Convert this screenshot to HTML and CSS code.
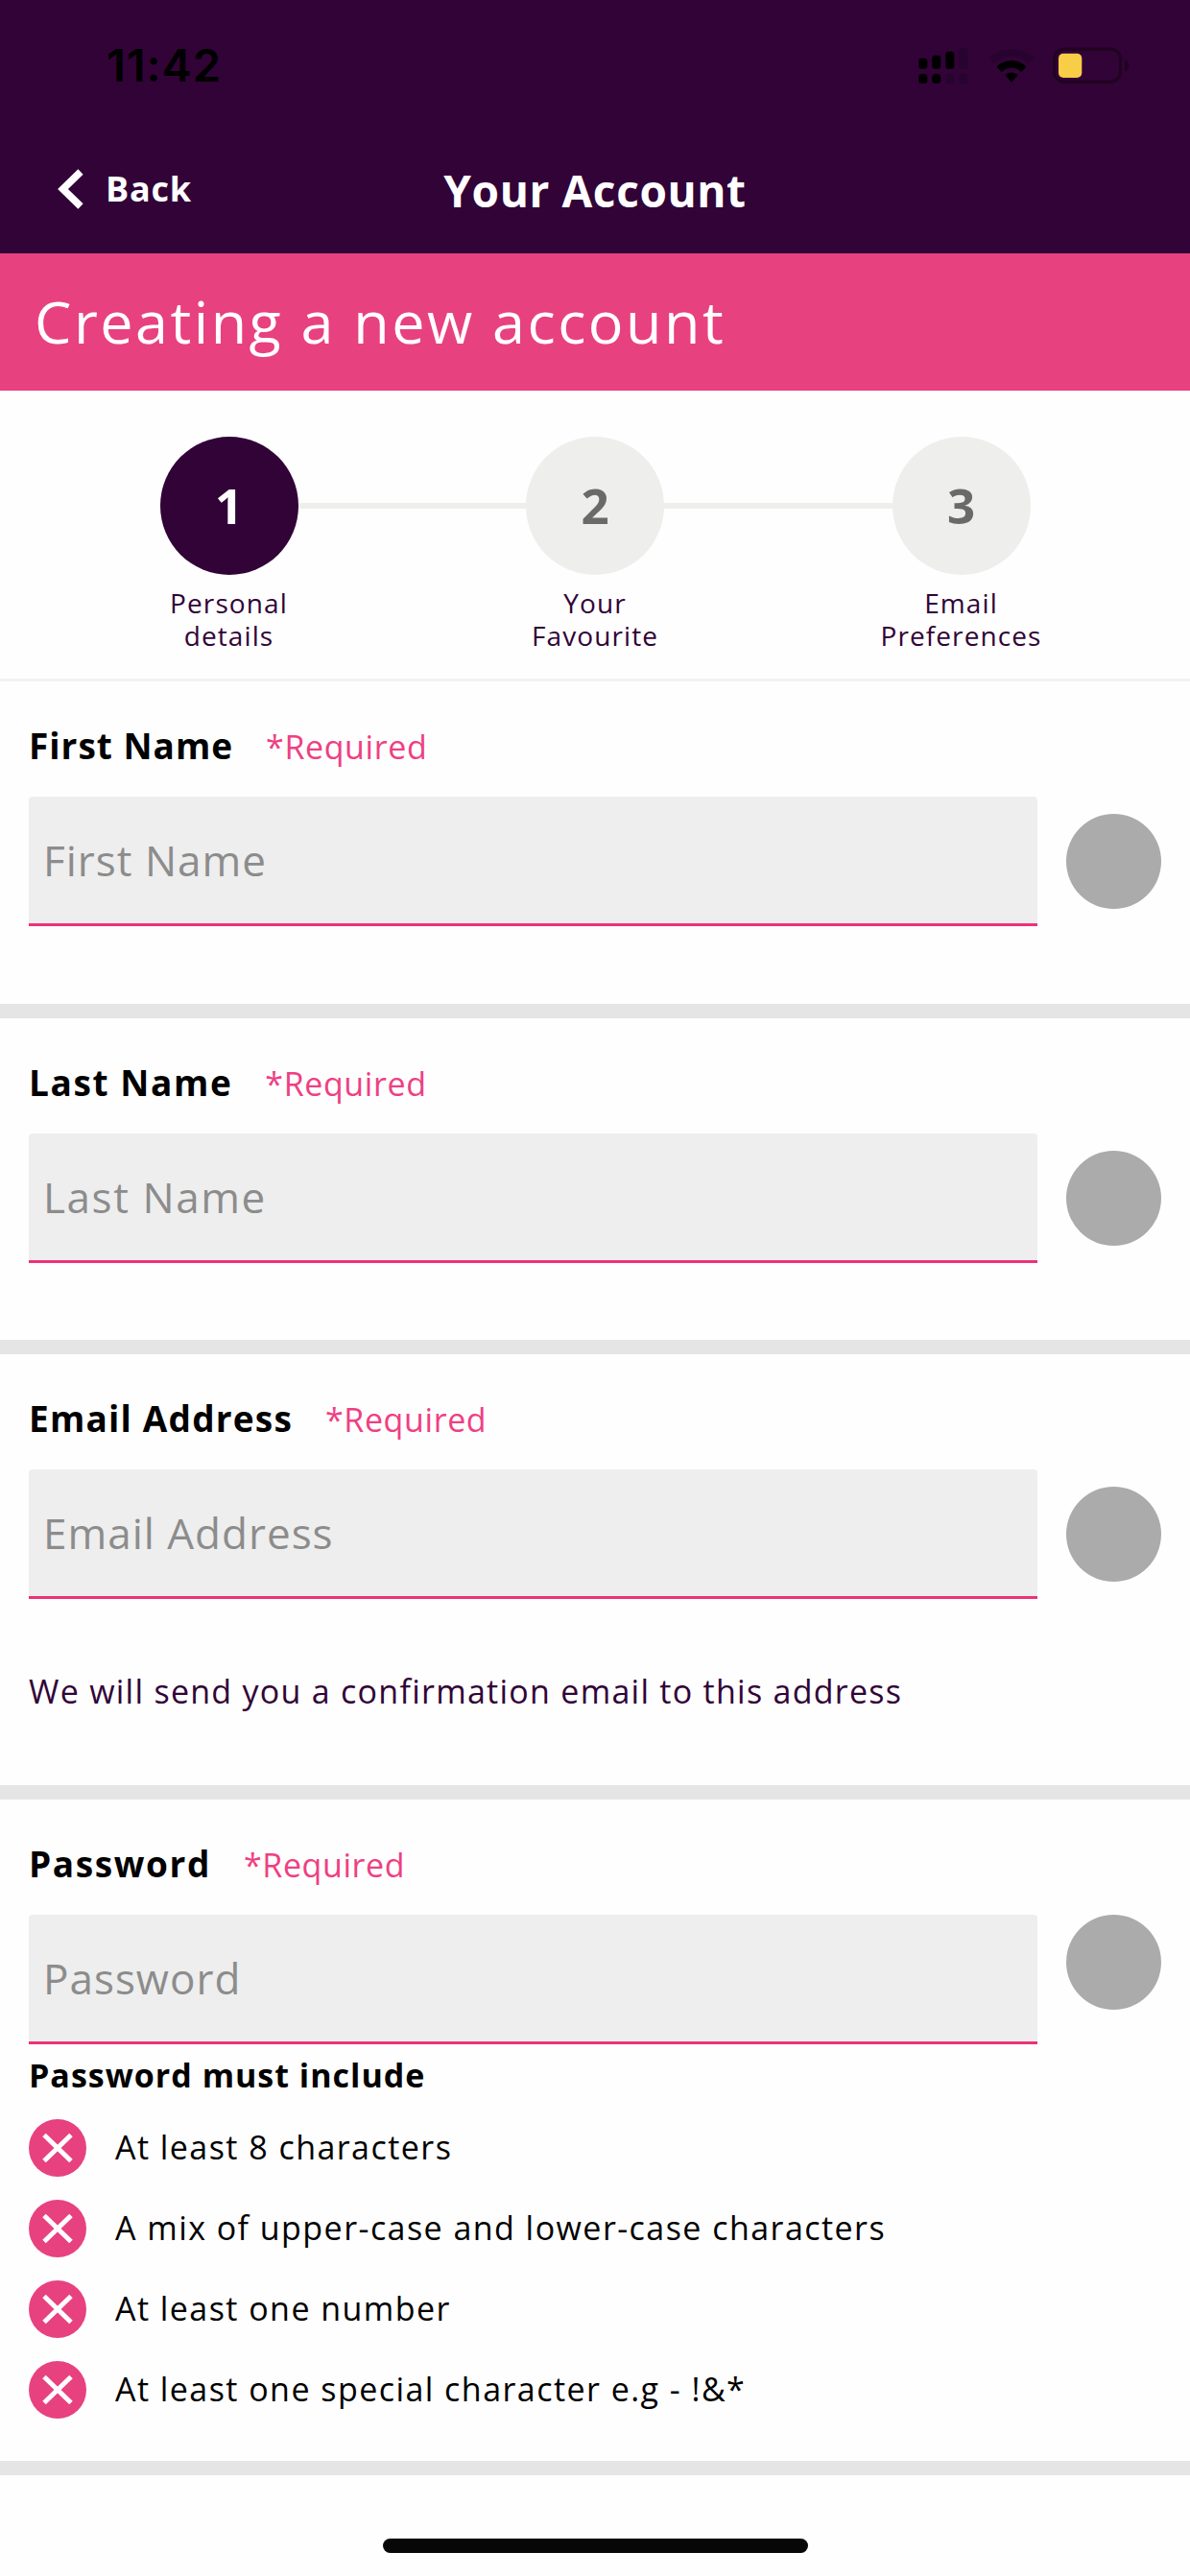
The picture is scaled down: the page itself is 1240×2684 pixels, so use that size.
FILE: index.html
```
<!DOCTYPE html>
<html lang="en">
<head>
  <meta charset="UTF-8">
  <title>Your Account</title>
  <link rel="stylesheet" href="styles.css">
</head>
<body>
  <header class="header">
    <div class="status">
      <span class="time">11:42</span>
      <svg class="status-icons" width="220" height="38" viewBox="0 0 220 38">
        <!-- signal -->
        <rect x="1.3" y="11.7" width="9" height="11" rx="3"/>
        <rect x="15.3" y="8.7" width="9" height="14" rx="3"/>
        <rect x="29.3" y="4.7" width="9" height="18" rx="3"/>
        <rect class="dim" x="43.3" y="1" width="9" height="21.7" rx="3"/>
        <rect x="1.3" y="28" width="9" height="10" rx="3.5"/>
        <rect x="15.3" y="28" width="9" height="10" rx="3.5"/>
        <rect class="dim" x="29.3" y="28" width="9" height="10" rx="3.5"/>
        <rect class="dim" x="43.3" y="28" width="9" height="10" rx="3.5"/>
        <!-- wifi -->
        <path class="dim" d="M74.7 12 A33 33 0 0 1 121.3 12 L116 17 A25.5 25.5 0 0 0 80 17 Z"/>
        <path d="M82.5 20.5 A22 22 0 0 1 113.5 20.5 L108.3 26 A14.5 14.5 0 0 0 87.7 26 Z"/>
        <path d="M91.3 29 A10 10 0 0 1 104.7 29 L98 37 Z"/>
        <!-- battery -->
        <rect class="battery" x="142.8" y="2.2" width="68.7" height="34" rx="10"/>
        <rect class="charge" x="147" y="6.7" width="24.3" height="25.3" rx="5"/>
        <path class="nub" d="M216.3 13 Q220 15 220 19.2 Q220 23.5 216.3 25.5 Z"/>
      </svg>
    </div>
    <div class="nav">
      <a class="back">
        <svg width="28" height="42" viewBox="0 0 28 42"><path d="M24 3 L5.5 21 L24 39"/></svg>
        Back
      </a>
      <h1 class="title">Your Account</h1>
    </div>
  </header>

  <h2 class="banner">Creating a new account</h2>

  <div class="steps">
    <div class="track">
      <div class="circle active">1</div>
      <div class="line"></div>
      <div class="circle">2</div>
      <div class="line"></div>
      <div class="circle">3</div>
    </div>
    <div class="names">
      <div>Personal<br>details</div>
      <div>Your<br>Favourite</div>
      <div>Email<br>Preferences</div>
    </div>
  </div>

  <form>
    <div class="section">
      <div class="label"><label for="first">First Name</label><span class="required">*Required</span></div>
      <div class="field">
        <input id="first" type="text" placeholder="First Name">
        <div class="dot"></div>
      </div>
    </div>

    <div class="section last">
      <div class="label"><label for="last">Last Name</label><span class="required">*Required</span></div>
      <div class="field">
        <input id="last" type="text" placeholder="Last Name">
        <div class="dot"></div>
      </div>
    </div>

    <div class="section email">
      <div class="label"><label for="email">Email Address</label><span class="required">*Required</span></div>
      <div class="field">
        <input id="email" type="email" placeholder="Email Address">
        <div class="dot"></div>
      </div>
      <p class="help">We will send you a confirmation email to this address</p>
    </div>

    <div class="section password">
      <div class="label"><label for="password">Password</label><span class="required">*Required</span></div>
      <div class="field">
        <input id="password" type="password" placeholder="Password">
        <div class="dot"></div>
      </div>
      <h3 class="must">Password must include</h3>
      <ul class="rules">
        <li><svg class="cross" viewBox="0 0 60 60"><circle cx="30" cy="30" r="30"/><path d="M16 16.5 L44 43.5 M44 16.5 L16 43.5"/></svg><span>At least 8 characters</span></li>
        <li><svg class="cross" viewBox="0 0 60 60"><circle cx="30" cy="30" r="30"/><path d="M16 16.5 L44 43.5 M44 16.5 L16 43.5"/></svg><span>A mix of upper-case and lower-case characters</span></li>
        <li><svg class="cross" viewBox="0 0 60 60"><circle cx="30" cy="30" r="30"/><path d="M16 16.5 L44 43.5 M44 16.5 L16 43.5"/></svg><span>At least one number</span></li>
        <li><svg class="cross" viewBox="0 0 60 60"><circle cx="30" cy="30" r="30"/><path d="M16 16.5 L44 43.5 M44 16.5 L16 43.5"/></svg><span>At least one special character e.g - !&amp;*</span></li>
      </ul>
    </div>
  </form>

  <div class="home-bar"></div>
</body>
</html>
```
FILE: styles.css
```
* {
  box-sizing: border-box;
  margin: 0;
  padding: 0;
}

body {
  width: 1240px;
  height: 2684px;
  background: #fefefe;
  font-family: 'Open Sans', 'Noto Sans', sans-serif;
  color: #000;
  overflow: hidden;
}

.header {
  background: #310337;
  height: 264px;
}

.status {
  display: flex;
  justify-content: space-between;
  align-items: center;
  height: 135px;
  padding: 0 64px 0 111px;
}

.time {
  font-family: 'Inter', sans-serif;
  font-size: 47px;
  font-weight: 600;
  letter-spacing: 0.9px;
}

.status-icons .dim {
  fill: #270330;
}

.status-icons .battery {
  fill: none;
  stroke: #21031f;
  stroke-width: 3;
}

.status-icons .charge {
  fill: #f7ce46;
}

.status-icons .nub {
  fill: #1c0220;
}

.nav {
  display: grid;
  grid-template-columns: 1fr auto 1fr;
  align-items: center;
  height: 123px;
  color: #fff;
}

.back {
  display: flex;
  align-items: center;
  gap: 22px;
  padding-left: 60px;
  font-size: 36px;
  font-weight: 700;
  letter-spacing: 0.8px;
}

.back path {
  fill: none;
  stroke: #fff;
  stroke-width: 7.5;
}

.title {
  font-size: 46px;
  font-weight: 700;
  letter-spacing: 0.6px;
  padding-top: 2px;
}

.banner {
  background: #e8417f;
  color: #fff;
  height: 143px;
  line-height: 142px;
  padding-left: 36px;
  font-size: 61px;
  font-weight: 400;
  letter-spacing: 2.5px;
}

.steps {
  height: 303px;
  padding-top: 48px;
  border-bottom: 3px solid #f1f1f1;
}

.track {
  display: flex;
  justify-content: center;
  align-items: center;
}

.circle {
  width: 144px;
  height: 144px;
  border-radius: 50%;
  background: #eeeeed;
  color: #6a6a6a;
  font-size: 51px;
  font-weight: 700;
  line-height: 142px;
  text-align: center;
}

.circle.active {
  background: #310337;
  color: #fff;
}

.line {
  width: 237.5px;
  height: 6px;
  background: #eeeeed;
}

.names {
  display: grid;
  grid-template-columns: repeat(3, 381.5px);
  justify-content: center;
  margin-top: 12px;
  text-align: center;
  color: #310337;
  font-size: 28px;
  line-height: 34px;
  letter-spacing: 1.1px;
}

.section {
  padding: 42px 30px 80.5px;
  border-bottom: 15px solid #e5e5e5;
}

.label {
  display: flex;
  align-items: baseline;
  gap: 34px;
  height: 50px;
  line-height: 50px;
  margin-bottom: 28px;
  font-size: 37px;
  font-weight: 700;
  letter-spacing: 1px;
}

.required {
  color: #ef3f83;
  font-size: 34px;
  font-weight: 400;
  letter-spacing: 0.6px;
}

.field {
  display: flex;
  align-items: center;
  gap: 30px;
}

input {
  flex: 1;
  height: 135px;
  padding: 0 15px;
  border: none;
  border-bottom: 3px solid #ed3277;
  border-radius: 4px 4px 0 0;
  background: #eee;
  font-family: inherit;
  font-size: 44px;
  letter-spacing: 1px;
}

input::placeholder {
  color: #8c8c8c;
}

.dot {
  width: 99px;
  height: 99px;
  border-radius: 50%;
  background: #ababab;
}

.last .label,
.last input,
.password .label {
  letter-spacing: 1.6px;
}

.last .required,
.password .required {
  letter-spacing: 0.6px;
}

.email {
  padding-bottom: 74px;
}

.email .label {
  letter-spacing: 1.2px;
}

.help {
  margin-top: 72px;
  color: #310337;
  font-size: 34px;
  line-height: 48px;
  letter-spacing: 1.27px;
}

.password {
  padding-bottom: 44px;
}

.password .field {
  align-items: flex-start;
}

.must {
  margin-top: 8px;
  font-size: 34px;
  line-height: 48px;
  letter-spacing: 1px;
}

.rules {
  display: grid;
  gap: 24px;
  margin-top: 21.5px;
  list-style: none;
}

.rules li {
  display: flex;
  align-items: center;
  gap: 30px;
  height: 60px;
  font-size: 34px;
  letter-spacing: 1.45px;
}

.rules span {
  padding-bottom: 2px;
}

.cross {
  width: 60px;
  height: 60px;
  fill: #e8417f;
  stroke-width: 5;
}

.cross path {
  stroke: #fff;
}

.home-bar {
  width: 443px;
  height: 15px;
  margin: 66px auto 0;
  border-radius: 8px;
  background: #070707;
}
```
